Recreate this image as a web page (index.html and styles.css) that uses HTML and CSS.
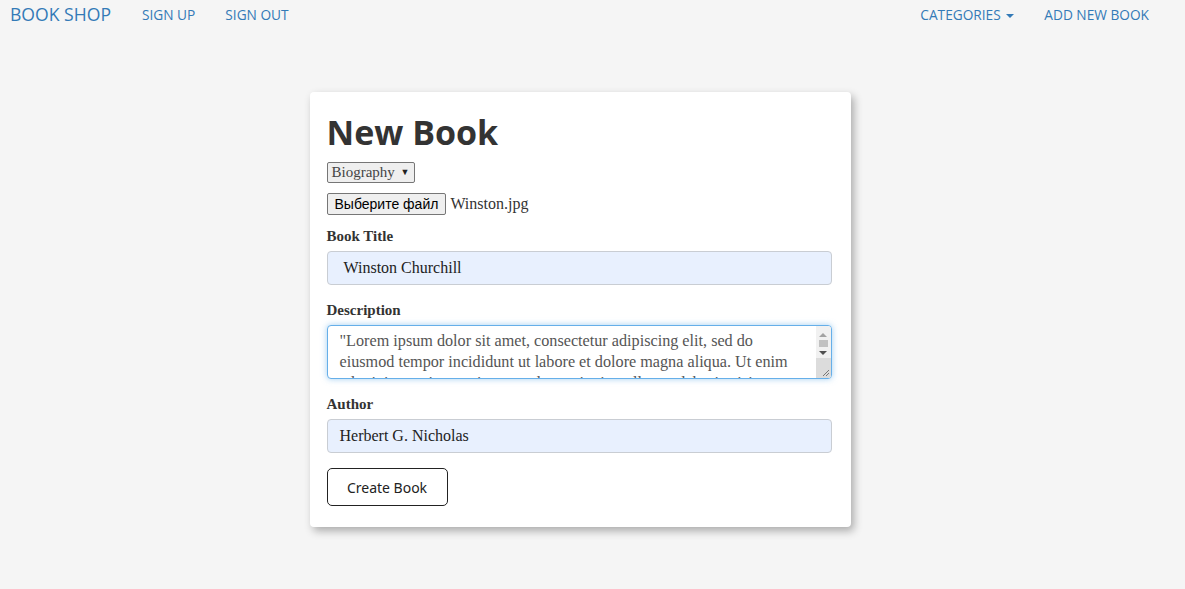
FILE: index.html
```html
<!DOCTYPE html>
<html>
<head>
<meta charset="utf-8">
<link rel="stylesheet" href="styles.css">
</head>
<body>
<nav class="navbar">
  <div class="nav-left">
    <a class="brand" href="#">BOOK SHOP</a>
    <a class="nav-link" href="#">SIGN UP</a>
    <a class="nav-link" href="#">SIGN OUT</a>
  </div>
  <div class="nav-right">
    <a class="nav-link" href="#">CATEGORIES <span class="caret"></span></a>
    <a class="nav-link" href="#">ADD NEW BOOK</a>
  </div>
</nav>
<main class="page">
  <div class="card">
    <h1 class="title">New Book</h1>
    <div class="row-select">
      <span class="select">Biography <span class="sel-arrow">▼</span></span>
    </div>
    <div class="row-file">
      <span class="file-btn">Выберите файл</span>
      <span class="file-name">Winston.jpg</span>
    </div>
    <label class="label">Book Title</label>
    <div class="input input-wide">Winston Churchill</div>
    <label class="label">Description</label>
    <div class="textarea">
      <div class="ta-text">"Lorem ipsum dolor sit amet, consectetur adipiscing elit, sed do eiusmod tempor incididunt ut labore et dolore magna aliqua. Ut enim ad minim veniam, quis nostrud exercitation ullamco laboris nisi ut aliquip ex ea commodo consequat."</div>
      <div class="ta-scroll">
        <span class="sb-up"></span>
        <span class="sb-thumb"></span>
        <span class="sb-down"></span>
        <span class="sb-corner">
          <svg width="15" height="20" viewBox="0 0 15 20"><path d="M13 12 L7 18 M13 15 L10 18" stroke="#777" stroke-width="1"/></svg>
        </span>
      </div>
    </div>
    <label class="label">Author</label>
    <div class="input">Herbert G. Nicholas</div>
    <button class="btn">Create Book</button>
  </div>
</main>
</body>
</html>
```

FILE: styles.css
```css
html, body {
  margin: 0;
  padding: 0;
  background: #f5f5f5;
}
body {
  font-family: "Open Sans", "Noto Sans", sans-serif;
  color: #333;
  height: 589px;
  overflow: hidden;
}
a { text-decoration: none; }
.navbar {
  display: flex;
  justify-content: space-between;
  align-items: center;
  height: 28px;
  padding: 0 36px 0 10px;
}
.nav-left, .nav-right {
  display: flex;
  align-items: center;
}
.brand {
  color: #337ab7;
  font-size: 17.6px;
  margin-right: 31px;
}
.nav-left .nav-link { margin-right: 30px; }
.nav-right .nav-link { margin-left: 30px; }
.nav-link {
  color: #337ab7;
  font-size: 13.7px;
}
.caret {
  display: inline-block;
  width: 0;
  height: 0;
  border-top: 4px solid #337ab7;
  border-left: 4px solid transparent;
  border-right: 4px solid transparent;
  vertical-align: middle;
  margin-left: 2px;
}
.page {
  display: flex;
  justify-content: center;
  padding-top: 64px;
  padding-right: 25px;
}
.card {
  width: 506px;
  background: #fff;
  border-radius: 4px;
  padding: 15px 18px 21px 17px;
  box-shadow: 3px 4px 8px rgba(0,0,0,0.3);
  display: flex;
  flex-direction: column;
  align-items: flex-start;
}
.title {
  font-size: 34px;
  font-weight: 700;
  margin: 0 0 5px 0;
  line-height: 50px;
  color: #333;
}
.row-select { margin-bottom: 10px; display: flex; }
.select {
  display: inline-block;
  font-family: "Liberation Serif", serif;
  font-size: 15px;
  color: #444;
  background: #efefef;
  border: 1px solid #767676;
  border-radius: 2px;
  padding: 0 4px 0 4px;
  line-height: 19px;
  height: 19px;
}
.sel-arrow {
  font-size: 9px;
  color: #222;
  vertical-align: 2px;
  margin-left: 2px;
}
.row-file {
  display: flex;
  align-items: center;
  margin-bottom: 12px;
}
.file-btn {
  font-family: "Liberation Sans", Arial, sans-serif;
  font-size: 14px;
  color: #000;
  background: #efefef;
  border: 1px solid #767676;
  border-radius: 2px;
  padding: 1px 7px;
  line-height: 18px;
}
.file-name {
  font-family: "Liberation Serif", serif;
  font-size: 16px;
  color: #333;
  margin-left: 4px;
}
.label {
  font-family: "Liberation Serif", serif;
  font-weight: 700;
  font-size: 15px;
  color: #333;
  line-height: 18px;
  margin-bottom: 6px;
}
.input {
  box-sizing: border-box;
  width: 505px;
  height: 34px;
  background: #e8f0fe;
  border: 1px solid #c9cdd3;
  border-radius: 4px;
  padding: 0 12px;
  font-family: "Liberation Serif", serif;
  font-size: 16px;
  color: #222;
  line-height: 32px;
  margin-bottom: 15px;
}
.input-wide { padding-left: 16px; margin-bottom: 16px; }
.textarea {
  box-sizing: border-box;
  width: 505px;
  height: 54px;
  border: 1px solid #66afe9;
  border-radius: 4px;
  box-shadow: 0 0 6px rgba(102,175,233,0.6);
  margin: 0 0 16px 0;
  display: flex;
  overflow: hidden;
  background: #fff;
}
.ta-text {
  flex: 1;
  height: 52px;
  padding: 5px 22px 0 12px;
  font-family: "Liberation Serif", serif;
  font-size: 16.2px;
  line-height: 21px;
  color: #555;
  overflow: hidden;
  box-sizing: border-box;
}
.ta-scroll {
  width: 15px;
  background: #f1f1f1;
  display: flex;
  flex-direction: column;
  align-items: center;
}
.sb-up {
  width: 0;
  height: 0;
  margin-top: 7px;
  border-bottom: 4px solid #a3a3a3;
  border-left: 4px solid transparent;
  border-right: 4px solid transparent;
}
.sb-thumb {
  width: 9px;
  height: 7px;
  background: #c1c1c1;
  margin-top: 3px;
}
.sb-down {
  width: 0;
  height: 0;
  margin-top: 4px;
  border-top: 4px solid #505050;
  border-left: 4px solid transparent;
  border-right: 4px solid transparent;
}
.sb-corner {
  margin-top: auto;
  width: 15px;
  height: 20px;
  background: #dcdcdc;
  display: flex;
}
.btn {
  width: 121px;
  height: 38px;
  background: #fff;
  border: 1px solid #222;
  border-radius: 5px;
  font-family: "Noto Sans", "Open Sans", sans-serif;
  font-size: 14px;
  color: #222;
  padding: 0;
}
```
